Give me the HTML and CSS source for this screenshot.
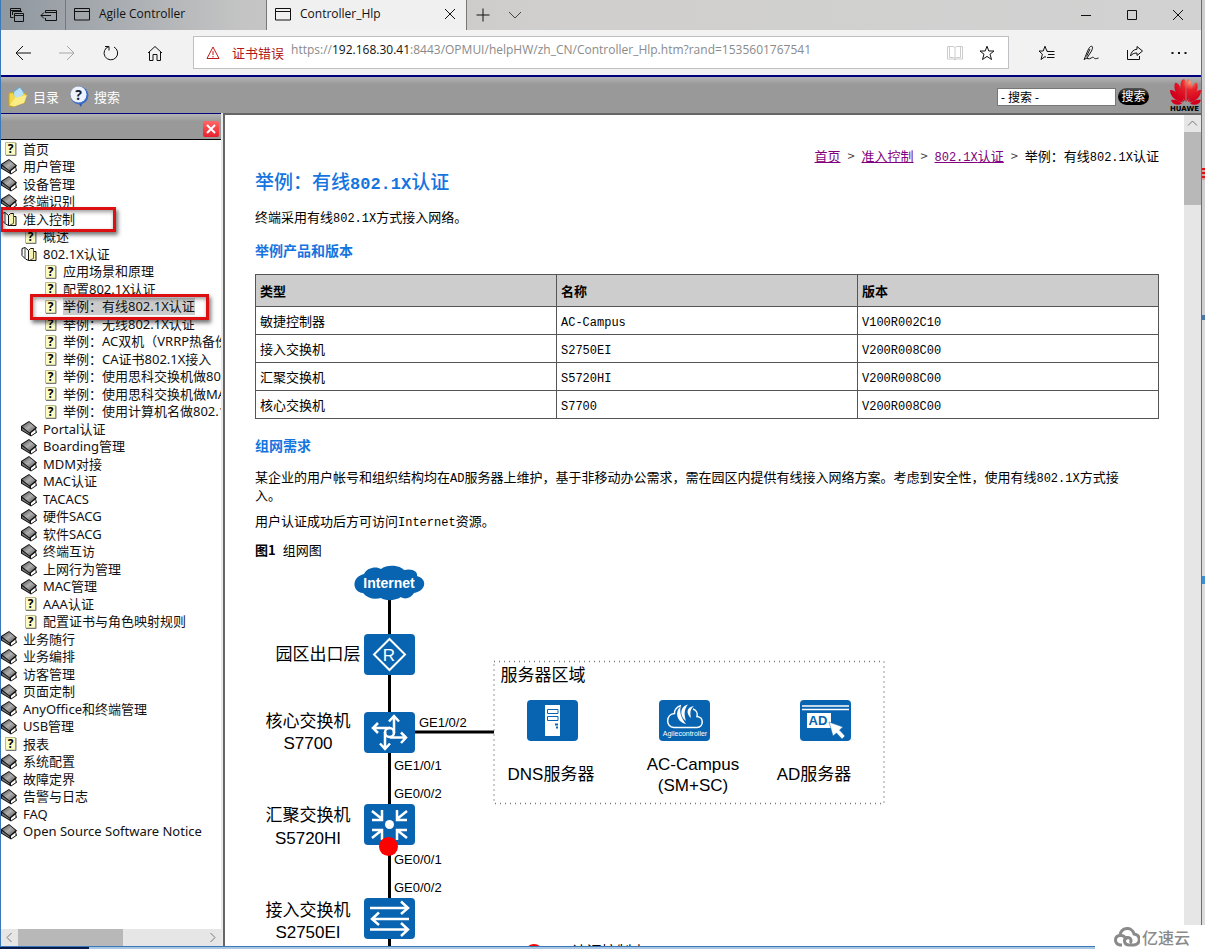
FILE: index.html
```html
<!DOCTYPE html>
<html lang="zh-CN">
<head>
<meta charset="utf-8">
<title>Controller_Hlp</title>
<link rel="stylesheet" href="styles.css">
</head>
<body>
<svg class="sprite" aria-hidden="true">
  <defs>
    <linearGradient id="cover" x1="0" y1="0" x2="1" y2="1"><stop offset="0" stop-color="#444"/><stop offset=".5" stop-color="#b0b0b0"/><stop offset="1" stop-color="#555"/></linearGradient>
  </defs>
  <symbol id="book" viewBox="0 0 18 16">
    <path d="M0 5 8 0 16 6.500 15 8 16 11.500 10 15.500 0 9.500Z" fill="#111"/>
    <path d="M1 5.500 8 1 14.500 6.500 8.500 11.500Z" fill="url(#cover)"/>
    <path d="M10 12 14.500 8.500V11.500L10 14.500Z" fill="#fff"/>
    <path d="M1 7 8.500 12.500V13.500L1 9Z" fill="#777"/>
  </symbol>
  <symbol id="open" viewBox="0 0 18 16">
    <path d="M1 2.500 4 1.500 7.500 4.500V14.500L4.500 13 1 9.500Z" fill="#fff" stroke="#111"/>
    <path d="M4 2V12" stroke="#444" fill="none"/>
    <path d="M7.500 4.500 9.500 2.500H12.500V5.500H15V14.500H7.500Z" fill="#f7f3b4" stroke="#111"/>
    <path d="M12.500 3V12.500L9 14" stroke="#555" fill="none"/>
  </symbol>
  <symbol id="page" viewBox="0 0 18 16">
    <path d="M4.500 1.500H14.500V14H4.500Z" fill="#fcfbc4" stroke="#b9b98a"/>
    <path d="M5 14.500H15V2" fill="none" stroke="#777"/>
    <text x="9.500" y="12" text-anchor="middle" class="mark">?</text>
  </symbol>
</svg>

<div class="desktop">
<div class="window">
  <header class="tabs">
    <div class="tab-tools">
      <button aria-label="标签页"><svg width="16" height="16" viewBox="0 0 16 16"><path d="M4.500 10.500H1.500V1.500H11.500V4.500M1.500 3.500H11.500M3.500 8V4.500H13M5.500 6.500H14.500V14.500H5.500ZM5.500 8.500H14.500"/></svg></button>
      <button aria-label="搁置标签页"><svg width="18" height="16" viewBox="0 0 18 16"><path d="M5.500 6V3.500H16.500V13.500H5.500V11M5.500 5.500H16.500M1 8.500H11M4 5.500 1 8.500 4 11.500"/></svg></button>
    </div>
    <button class="tab"><svg width="16" height="14" viewBox="0 0 16 14"><path d="M.5 1.500H15.500V13H.5ZM.5 4.500H15.500"/></svg><span>Agile Controller</span></button>
    <div class="tab current"><svg width="16" height="14" viewBox="0 0 16 14"><path d="M.5 1.500H15.500V13H.5ZM.5 4.500H15.500"/></svg><span>Controller_Hlp</span><button aria-label="关闭标签页"><svg width="12" height="12" viewBox="0 0 12 12"><path d="M1 1 11 11M11 1 1 11"/></svg></button></div>
    <button class="plus" aria-label="新建标签页"><svg width="14" height="14" viewBox="0 0 14 14"><path d="M7 .5V13.500M.5 7H13.500"/></svg></button>
    <button class="plus" aria-label="标签预览"><svg width="14" height="8" viewBox="0 0 14 8"><path d="M1 1 7 7 13 1"/></svg></button>
    <div class="caption-buttons">
      <button aria-label="最小化"><svg width="12" height="12" viewBox="0 0 12 12"><path d="M1 6.500H11"/></svg></button>
      <button aria-label="最大化"><svg width="12" height="12" viewBox="0 0 12 12"><path d="M1.500 1.500H10.500V10.500H1.500Z"/></svg></button>
      <button aria-label="关闭"><svg width="12" height="12" viewBox="0 0 12 12"><path d="M1 1 11 11M11 1 1 11"/></svg></button>
    </div>
  </header>

  <nav class="address">
    <button aria-label="后退"><svg width="18" height="16" viewBox="0 0 18 16"><path d="M17 8H2M9 1 2 8 9 15"/></svg></button>
    <button aria-label="前进" class="dim"><svg width="18" height="16" viewBox="0 0 18 16"><path d="M1 8H16M9 1 16 8 9 15"/></svg></button>
    <button aria-label="刷新"><svg width="18" height="18" viewBox="0 0 18 18"><path d="M7 2.500A6.800 6.800 0 1 0 12 3M3 2.500H7V6.500"/></svg></button>
    <button aria-label="主页"><svg width="18" height="18" viewBox="0 0 18 18"><path d="M2 9 9 2.500 16 9M3.500 8V16.500H7V10.500H11V16.500H14.500V8"/></svg></button>
    <div class="url">
      <svg class="warn" width="14" height="14" viewBox="0 0 14 14"><path d="M7 1 13 12.500H1ZM7 5V9M7 10V11.500"/></svg>
      <span class="cert">证书错误</span>
      <div class="url-text" role="textbox" contenteditable="true" spellcheck="false" aria-label="地址">https://<b>192.168.30.41</b>:8443/OPMUI/helpHW/zh_CN/Controller_Hlp.htm?rand=1535601767541</div>
      <button aria-label="阅读视图" class="faint"><svg width="16" height="16" viewBox="0 0 16 16"><path d="M.5 1.500H6.500L8 2.500 9.500 1.500H15.500V14H9.500L8 15 6.500 14H.5ZM8 2.500V15M2.500 1.500V12.500H6.500L8 13.500 9.500 12.500H13.500V1.500"/></svg></button>
      <button aria-label="收藏"><svg width="16" height="16" viewBox="0 0 16 16"><path d="M8 1.200 9.800 6H15L11 9.200 12.500 14.500 8 11.400 3.500 14.500 5 9.200 1 6H6.200Z"/></svg></button>
    </div>
    <button aria-label="中心"><svg width="18" height="16" viewBox="0 0 18 16"><path d="M9.500 6H8.800L7 1.200 5.200 6H1L4.400 9.200 3 14.500 7 11.600 8 12.300M9 6.500H16.500M10 9.500H16.500M9 12.500H16.500"/></svg></button>
    <button aria-label="笔记"><svg width="18" height="18" viewBox="0 0 18 18"><path d="M2 15.500C4 12 6 4 8.500 2.500 11 1.500 11 4 9.500 7L5 14 2 15.500ZM4.500 12.500 8 5M5 14.500C9 16 10 12 11.500 13.500S13.500 15 16.500 14"/></svg></button>
    <button aria-label="共享"><svg width="18" height="16" viewBox="0 0 18 16"><path d="M1.500 5V14.500H13.500V11M11 1.500 16.500 6 11 10.500V8C8 8 6 9 4.500 11 5 7 7.500 4.500 11 4.200Z"/></svg></button>
    <button aria-label="更多"><svg width="18" height="4" viewBox="0 0 18 4"><path d="M1.500 2H3.500M8 2H10M14.500 2H16.500" stroke-width="2"/></svg></button>
  </nav>

  <div class="toolbar">
    <a href="#toc"><svg width="20" height="22" viewBox="0 0 20 22"><path d="M5 6 12 1 17 8 12 14 5 13Z" fill="#a9daf5" stroke="#6aa4c8"/><path d="M1 7 5 6.500 7 10 18 7 17 16 6 20.500 1 20Z" fill="#f3d84a" stroke="#c8a41c"/><path d="M6 8 12 2.500 16 8.500 12 11 7 12Z" fill="#b9e2f8"/><path d="M2 19 7 12 19 9 16 17 6 20.500Z" fill="#fcec85"/></svg><span>目录</span></a>
    <a href="#search"><svg width="20" height="22" viewBox="0 0 20 22"><path d="M8 15H14L12 21Z" fill="#2c55b0"/><circle cx="10.500" cy="9.500" r="9" fill="#3c6cc8"/><circle cx="9.500" cy="8.500" r="8" fill="#edf3ff"/><text x="9.500" y="13.500" text-anchor="middle" class="ask">?</text></svg><span>搜索</span></a>
    <form class="find">
      <input type="text" aria-label="搜索" value="- 搜索 -">
      <button type="button">搜索</button>
    </form>
    <svg class="brand" width="31" height="34" viewBox="0 0 31 34" role="img" aria-label="HUAWEI">
      <defs><radialGradient id="petal" cx="20" cy="4" r="20" gradientUnits="userSpaceOnUse"><stop offset="0" stop-color="#ff9a76"/><stop offset=".4" stop-color="#e8222a"/><stop offset="1" stop-color="#d2001c"/></radialGradient></defs>
      <g fill="url(#petal)"><path d="M15.500 24C10 16 9 7 12 2 15 0 16 3 15.800 8Z"/><path d="M16.500 24C22 16 23 7 20 2 17 0 16 3 16.200 8Z"/><path d="M14 24C6 18 3 11 5 5 9 3 13 14 14 24Z"/><path d="M18 24C26 18 29 11 27 5 23 3 19 14 18 24Z"/><path d="M13 24.500C5 23 0 18 0 12 5 11 10 18 13 24.500Z"/><path d="M19 24.500C27 23 31 18 31 12 27 11 22 18 19 24.500Z"/><path d="M12 25.500C8 28 3 27 1 22 5 21 9 23 12 25.500Z"/><path d="M20 25.500C24 28 29 27 31 22 27 21 23 23 20 25.500Z"/></g>
      <text x="0" y="33" class="brand-name">HUAWE</text>
    </svg>
  </div>

  <div class="frames">
    <aside class="side">
      <div class="side-head"><button aria-label="关闭目录"><svg width="10" height="10" viewBox="0 0 10 10"><path d="M1 1 9 9M9 1 1 9"/></svg></button></div>
      <ul class="tree">
        <li><svg><use href="#page"/></svg><a href="#">首页</a></li>
        <li><svg><use href="#book"/></svg><a href="#">用户管理</a></li>
        <li><svg><use href="#book"/></svg><a href="#">设备管理</a></li>
        <li><svg><use href="#book"/></svg><a href="#">终端识别</a></li>
        <li class="marked"><svg><use href="#open"/></svg><a href="#">准入控制</a><i class="frame frame-root"></i></li>
        <li class="l1"><svg><use href="#page"/></svg><a href="#">概述</a></li>
        <li class="l1"><svg><use href="#open"/></svg><a href="#">802.1X认证</a></li>
        <li class="l2"><svg><use href="#page"/></svg><a href="#">应用场景和原理</a></li>
        <li class="l2"><svg><use href="#page"/></svg><a href="#">配置802.1X认证</a></li>
        <li class="l2 marked selected"><svg><use href="#page"/></svg><a href="#">举例：有线802.1X认证</a><i class="frame frame-leaf"></i></li>
        <li class="l2"><svg><use href="#page"/></svg><a href="#">举例：无线802.1X认证</a></li>
        <li class="l2"><svg><use href="#page"/></svg><a href="#">举例：AC双机（VRRP热备份）</a></li>
        <li class="l2"><svg><use href="#page"/></svg><a href="#">举例：CA证书802.1X接入</a></li>
        <li class="l2"><svg><use href="#page"/></svg><a href="#">举例：使用思科交换机做802.1X</a></li>
        <li class="l2"><svg><use href="#page"/></svg><a href="#">举例：使用思科交换机做MAC</a></li>
        <li class="l2"><svg><use href="#page"/></svg><a href="#">举例：使用计算机名做802.1X</a></li>
        <li class="l1"><svg><use href="#book"/></svg><a href="#">Portal认证</a></li>
        <li class="l1"><svg><use href="#book"/></svg><a href="#">Boarding管理</a></li>
        <li class="l1"><svg><use href="#book"/></svg><a href="#">MDM对接</a></li>
        <li class="l1"><svg><use href="#book"/></svg><a href="#">MAC认证</a></li>
        <li class="l1"><svg><use href="#book"/></svg><a href="#">TACACS</a></li>
        <li class="l1"><svg><use href="#book"/></svg><a href="#">硬件SACG</a></li>
        <li class="l1"><svg><use href="#book"/></svg><a href="#">软件SACG</a></li>
        <li class="l1"><svg><use href="#book"/></svg><a href="#">终端互访</a></li>
        <li class="l1"><svg><use href="#book"/></svg><a href="#">上网行为管理</a></li>
        <li class="l1"><svg><use href="#book"/></svg><a href="#">MAC管理</a></li>
        <li class="l1"><svg><use href="#page"/></svg><a href="#">AAA认证</a></li>
        <li class="l1"><svg><use href="#page"/></svg><a href="#">配置证书与角色映射规则</a></li>
        <li><svg><use href="#book"/></svg><a href="#">业务随行</a></li>
        <li><svg><use href="#book"/></svg><a href="#">业务编排</a></li>
        <li><svg><use href="#book"/></svg><a href="#">访客管理</a></li>
        <li><svg><use href="#book"/></svg><a href="#">页面定制</a></li>
        <li><svg><use href="#book"/></svg><a href="#">AnyOffice和终端管理</a></li>
        <li><svg><use href="#book"/></svg><a href="#">USB管理</a></li>
        <li><svg><use href="#page"/></svg><a href="#">报表</a></li>
        <li><svg><use href="#book"/></svg><a href="#">系统配置</a></li>
        <li><svg><use href="#book"/></svg><a href="#">故障定界</a></li>
        <li><svg><use href="#book"/></svg><a href="#">告警与日志</a></li>
        <li><svg><use href="#book"/></svg><a href="#">FAQ</a></li>
        <li><svg><use href="#book"/></svg><a href="#">Open Source Software Notice</a></li>
      </ul>
      <div class="hscroll">
        <svg width="17" height="17" viewBox="0 0 17 17"><path d="M10.500 4 6 8.500 10.500 13"/></svg><span class="thumb"></span><svg class="end" width="17" height="17" viewBox="0 0 17 17"><path d="M6.500 4 11 8.500 6.500 13"/></svg>
      </div>
    </aside>

    <div class="pane">
      <main class="doc">
        <nav class="crumbs"><a href="#">首页</a><span class="sep">&gt;</span><a href="#">准入控制</a><span class="sep">&gt;</span><a href="#"><span class="mono">802.1X</span>认证</a><span class="sep">&gt;</span><span>举例：有线<span class="mono">802.1X</span>认证</span></nav>
        <h1>举例：有线<span class="mono">802.1X</span>认证</h1>
        <p class="intro">终端采用有线<span class="mono">802.1X</span>方式接入网络。</p>
        <h2>举例产品和版本</h2>
        <table>
          <thead><tr><th>类型</th><th>名称</th><th>版本</th></tr></thead>
          <tbody>
            <tr><td>敏捷控制器</td><td><span class="mono">AC-Campus</span></td><td><span class="mono">V100R002C10</span></td></tr>
            <tr><td>接入交换机</td><td><span class="mono">S2750EI</span></td><td><span class="mono">V200R008C00</span></td></tr>
            <tr><td>汇聚交换机</td><td><span class="mono">S5720HI</span></td><td><span class="mono">V200R008C00</span></td></tr>
            <tr><td>核心交换机</td><td><span class="mono">S7700</span></td><td><span class="mono">V200R008C00</span></td></tr>
          </tbody>
        </table>
        <h2 class="need">组网需求</h2>
        <p class="long">某企业的用户帐号和组织结构均在<span class="mono">AD</span>服务器上维护，基于非移动办公需求，需在园区内提供有线接入网络方案。考虑到安全性，使用有线<span class="mono">802.1X</span>方式接入。</p>
        <p>用户认证成功后方可访问<span class="mono">Internet</span>资源。</p>
        <figure>
          <figcaption><b>图1</b><span>组网图</span></figcaption>
          <svg class="topology" width="640" height="430" viewBox="255 563 640 430" role="img" aria-label="组网图">
            <path d="M389.500 598V1000M414 732H494" stroke="#000" stroke-width="3" fill="none"/>
            <path d="M363 593C352 592 351 577 364 574 367 567 377 566 381 569 387 564 400 565 404 570 413 568 418 572 417 576 428 579 426 591 414 593 411 598 405 600 401 597 395 601 385 601 381 598 374 600 367 598 363 593Z" fill="#0864b0"/>
            <text x="389" y="588" class="net">Internet</text>

            <g fill="#0864b0"><rect x="364" y="634" width="51" height="41" rx="4"/><rect x="364" y="712" width="51" height="41" rx="4"/><rect x="364" y="804" width="51" height="41" rx="4"/><rect x="364" y="898" width="51" height="41" rx="4"/></g>
            <path d="M389.500 639 405 654.500 389.500 670 374 654.500Z" fill="none" stroke="#fff" stroke-width="2"/>
            <text x="389" y="661" class="router">R</text>
            <g fill="none" stroke="#fff" stroke-width="2.500">
              <circle cx="389.500" cy="732.500" r="4.500"/>
              <path d="M394 733V716M389 721.500 394 716 399 721.500M385 732V749M380 743.500 385 749 390 743.500M390 728H373M378 723 373 728 378 733M390 737.500H406M401 732.500 406 737.500 401 743"/>
              <path d="M372 811 382 819M382 810V820H372M407 811 397 819M397 810V820H407M372 838 382 830M382 840V830H372M407 838 397 830M397 840V830H407"/>
              <path d="M370 908H408M401 901.500 408 908 401 914M409 919H372M379 912.500 372 919 379 925M370 929.500H408M401 923 408 929.500 401 936"/>
            </g>
            <circle cx="389.500" cy="824.500" r="4.500" fill="#fff"/>
            <circle cx="388.500" cy="846.500" r="9.500" fill="#f00"/>

            <text x="318" y="660" class="node">园区出口层</text>
            <text x="308" y="727" class="node">核心交换机</text><text x="308" y="749" class="node">S7700</text>
            <text x="308" y="821" class="node">汇聚交换机</text><text x="308" y="844" class="node">S5720HI</text>
            <text x="308" y="916" class="node">接入交换机</text><text x="308" y="938" class="node">S2750EI</text>
            <text x="419" y="727" class="port">GE1/0/2</text><text x="394" y="770" class="port">GE1/0/1</text><text x="394" y="798" class="port">GE0/0/2</text><text x="394" y="864" class="port">GE0/0/1</text><text x="394" y="892" class="port">GE0/0/2</text>

            <rect x="494" y="661.500" width="390" height="142" fill="none" stroke="#777" stroke-dasharray="1 4" stroke-width="1.500"/>
            <text x="543" y="681" class="node">服务器区域</text>
            <g fill="#0864b0"><rect x="527" y="700" width="51" height="41" rx="4"/><rect x="659" y="700" width="51" height="41" rx="4"/><rect x="800" y="700" width="51" height="41" rx="4"/></g>
            <path d="M545 705H560V736H545Z" fill="#fff"/>
            <path d="M547.500 709.500H558V713.500H547.500ZM547.500 716.500H558V720.500H547.500Z" fill="#fff" stroke="#0864b0"/>
            <path d="M555 724.500H558M556 727.500H558" stroke="#0864b0" stroke-width="2"/>
            <path d="M681 705.500C676 707 674 711 674.500 713.500 666 714 665 727 674 727.500H697C704 727 704 717 697 716.500 698 713 696 710 693 709" fill="none" stroke="#fff" stroke-width="1.500"/>
            <path d="M681 706C674 712 677 722 686 724 681 718 679 711 681 706ZM688 704.500C680 706 679 716 686 721 684 715 684 709 688 704.500ZM694 706C686 707 686 714 691 718 690 713 690 709 694 706Z" fill="#fff"/>
            <text x="685" y="736" class="tiny">Agilecontroller</text>
            <path d="M802 706H849M802 709.500H849" stroke="#fff" stroke-width="1.500"/>
            <path d="M807 713H831V728H807Z" fill="#fff"/><text x="818" y="725" class="ad">AD</text>
            <path d="M829 722 843 727 839.500 730 845 736 842 739 836.500 733 833 736Z" fill="#fff" stroke="#0864b0" stroke-width=".5"/>
            <text x="551" y="780" class="node">DNS服务器</text>
            <text x="693" y="770" class="node">AC-Campus</text><text x="693" y="791" class="node">(SM+SC)</text>
            <text x="814" y="780" class="node">AD服务器</text>
            <circle cx="534" cy="953" r="9" fill="#f00"/><text x="609" y="957" class="node legend">认证控制点</text>
          </svg>
        </figure>
      </main>
      <div class="vscroll"><svg width="17" height="17" viewBox="0 0 17 17"><path d="M4 10.500 8.500 6 13 10.500"/></svg><span class="thumb"></span></div>
    </div>
  </div>
</div>
<div class="behind"><i class="speck"></i><i class="pin"></i></div>
</div>
<div class="taskbar"><span></span></div>
<div class="watermark"><svg width="26" height="22" viewBox="0 0 26 22"><path d="M8 19H6C0 18 0 10 6 9.500 7 1 18 0 20 8 27 9 27 18 20 19H15C10 19 9 13 13 11.500 17 11 18 15 16 17M6 9.500C9 9 12 11 12 14"/></svg><span>亿速云</span></div>
</body>
</html>
```

FILE: styles.css
```css
* { box-sizing: border-box; }
body {
  margin: 0;
  height: 100vh;
  overflow: hidden;
  display: flex;
  flex-direction: column;
  position: relative;
  font: 13px/18px "Open Sans", "Noto Sans CJK SC", sans-serif;
  color: #000;
  background: #fff;
}
button { border: 0; padding: 0; background: none; font: inherit; color: inherit; display: flex; align-items: center; justify-content: center; }
svg { display: block; flex: none; }
button > svg, .tab > svg, .warn, .hscroll svg, .vscroll svg { fill: none; stroke: currentColor; }
.sprite { position: absolute; width: 0; height: 0; }

.desktop { flex: 1; min-height: 0; display: flex; }
.window { flex: 1; min-width: 0; display: flex; flex-direction: column; border: solid #3a78b8; border-width: 0 1px 1px; }
.behind { width: 3px; background: linear-gradient(#cfcfcf 0 315px, #4a76a8 315px 320px, #dcdcdc 320px); padding-top: 168px; overflow: hidden; }
.speck { display: block; width: 3px; height: 12px; background: repeating-linear-gradient(#e01010 0 2px, #d8a0a0 2px 4px); }
.pin { display: block; height: 8px; margin-top: 396px; background: #3f8fd0; }

/* Tab strip */
.tabs { display: flex; height: 30px; flex: none; color: #111; background: linear-gradient(90deg, #8f979f, #c4c4c4 20%, #d0cfce 45%, #d2d2d2); }
.tab-tools { display: flex; width: 64px; }
.tab-tools button { width: 32px; }
.tab { display: flex; align-items: center; justify-content: flex-start; gap: 9px; width: 201px; padding: 0 0 3px 8px; border-left: 1px solid #777; font: 12px/18px "Open Sans", sans-serif; }
.current { background: #f0f0f0; border-right: 1px solid #777; }
.current button { margin-left: auto; padding-right: 10px; }
.plus { width: 32px; }
.plus + .plus { color: #444; }
.caption-buttons { display: flex; margin-left: auto; }
.caption-buttons button { width: 46px; }

/* Address bar */
.address { display: flex; align-items: center; flex: none; height: 45px; background: #f2f2f2; color: #111; }
.address > button { width: 44px; height: 44px; }
.address .dim { color: #a6a6a6; }
.url { flex: 1; min-width: 0; height: 33px; margin: 0 16px; display: flex; align-items: center; background: #fff; border: 1px solid #c0c0c4; }
.warn { margin: 0 12px; color: #c01818; }
.cert { color: #b01818; white-space: nowrap; margin-right: 7px; }
.url-text { flex: 1; min-width: 0; overflow: hidden; white-space: nowrap; font: 12px/18px "Open Sans", sans-serif; color: #8a8a8a; padding-bottom: 5px; }
.url-text b { font-weight: 400; color: #111; }
.url button { width: 32px; height: 32px; }
.url .faint { color: #ccc; }
.url button:last-child { margin-right: 5px; }

/* Help toolbar */
.toolbar { display: flex; align-items: center; flex: none; height: 38px; padding-left: 7px; border-top: 2px solid #00007c; background: linear-gradient(#b4b4b4, #999 20%); overflow: hidden; }
.toolbar a { display: flex; align-items: center; gap: 5px; margin-right: 10px; color: #fff; text-decoration: none; padding-top: 3px; }
.find { display: flex; align-items: center; gap: 2px; margin: 3px 21px 0 auto; }
.find input { width: 119px; height: 18px; border: 1px solid #777; padding: 0 3px; background: #fff; font: 12px/16px "Open Sans", "Noto Sans CJK SC", sans-serif; color: #000; border-radius: 0; }
.find button { width: 31px; height: 17px; border-radius: 9px; color: #fff; font-size: 12px; background: linear-gradient(#555, #000 50%); }
.brand-name { font: bold 7px "DejaVu Sans", sans-serif; fill: #000; }
.ask { font: bold 14px "Open Sans", sans-serif; fill: #123; }

/* Frames */
.frames { flex: 1; min-height: 0; display: flex; background: #e9e9e9; }
.side { width: 220px; flex: none; display: flex; flex-direction: column; overflow: hidden; background: #fff; }
.side-head { display: flex; align-items: center; justify-content: flex-end; flex: none; height: 27px; padding: 4px 2px 0; border-top: 1px solid #00007c; border-bottom: 1px solid #000; background: linear-gradient(#b4b4b4, #999 30%); }
.side-head button { width: 16px; height: 16px; border-radius: 2px; background: linear-gradient(#f66, #e8202c); color: #fff; }
.side-head path { stroke-width: 2; }
.tree { flex: 1; min-height: 0; list-style: none; margin: 0; padding: 0; white-space: nowrap; font: 13px/18px "Noto Sans", "Noto Sans CJK SC", sans-serif; overflow: hidden; }
.tree li { display: flex; align-items: center; height: 18px; }
.tree li:nth-child(even) { height: 17px; }
.tree svg { width: 18px; height: 16px; margin-right: 4px; }
.tree a { color: #111; text-decoration: none; line-height: 17px; }
.tree .l1 { padding-left: 20px; }
.tree .l2 { padding-left: 40px; }
.tree .marked { position: relative; }
.selected a { background: #ccc; }
.frame { position: absolute; z-index: 1; border: 3px solid #dc1010; box-shadow: 2px 3px 4px #0008, inset 1px 2px 4px #0006; }
.frame-root { left: -1px; top: -3px; width: 116px; height: 25px; }
.frame-leaf { left: 29px; top: -4px; width: 179px; height: 26px; }
.mark { font: bold 12px "Open Sans", sans-serif; fill: #000; }
.hscroll { display: flex; flex: none; height: 17px; background: #e6e6e6; color: #777; }
.hscroll .thumb { width: 105px; background: #b8b8b8; }
.hscroll .end { margin-left: auto; }

.pane { flex: 1; min-width: 0; margin-left: 2px; display: flex; border: solid #666; border-width: 2px 0 0 2px; background: #fff; }
.vscroll { width: 17px; flex: none; background: #e6e6e6; color: #777; }
.vscroll .thumb { display: block; height: 73px; background: #b8b8b8; }

/* Document */
.doc { flex: 1; min-width: 0; overflow: hidden; padding: 32px 25px 0 30px; font: 13px/18px "Noto Sans CJK SC", sans-serif; }
.mono { font-family: "Liberation Mono", monospace; font-size: 12px; line-height: 12px; }
.crumbs { display: flex; justify-content: flex-end; height: 18px; }
.crumbs a { color: #800080; }
.sep { width: 21px; text-align: center; color: #444; }
h1 { margin: 4px 0 0; font-size: 19px; line-height: 24px; color: #1474e0; font-weight: 500; }
h1 .mono { font-size: 17px; font-weight: bold; }
p { margin: 8px 0 0; }
.intro { margin-top: 15px; }
h2 { margin: 14px 0; font-size: 14px; line-height: 20px; color: #1474e0; }
table { width: 100%; table-layout: fixed; border-collapse: collapse; }
th, td { border: 1px solid #555; padding: 0 4px; text-align: left; height: 28px; }
th { background: #cdcdcd; height: 32px; }
.need { margin: 16px 0 13px; }
.long { padding-right: 24px; }
figure { margin: 11px 0 0; }
figcaption { display: flex; gap: 7px; margin-bottom: 4px; }
.topology text { font-family: "Liberation Sans", "Noto Sans CJK SC", sans-serif; }
.topology .node { font-size: 17px; text-anchor: middle; }
.topology .legend { font-size: 15px; }
.topology .port { font-size: 13px; }
.topology .net { font-size: 14px; font-weight: bold; fill: #fff; text-anchor: middle; }
.topology .router { font-size: 17px; fill: #fff; text-anchor: middle; }
.topology .tiny { font-size: 7px; fill: #fff; text-anchor: middle; }
.topology .ad { font-size: 13px; font-weight: bold; fill: #0864b0; text-anchor: middle; }

.taskbar { height: 2px; flex: none; background: #a9c6e2; }
.taskbar span { display: block; width: 89px; height: 2px; background: #0a1c4c; }
.watermark { position: absolute; right: 0; bottom: 0; display: flex; align-items: center; gap: 2px; height: 24px; width: 110px; padding-left: 19px; background: #fff; color: #8a8a8a; font: 500 16px/24px "Noto Sans CJK SC", sans-serif; white-space: nowrap; }
.watermark svg { fill: none; stroke: #8a8a8a; stroke-width: 3; }
```
